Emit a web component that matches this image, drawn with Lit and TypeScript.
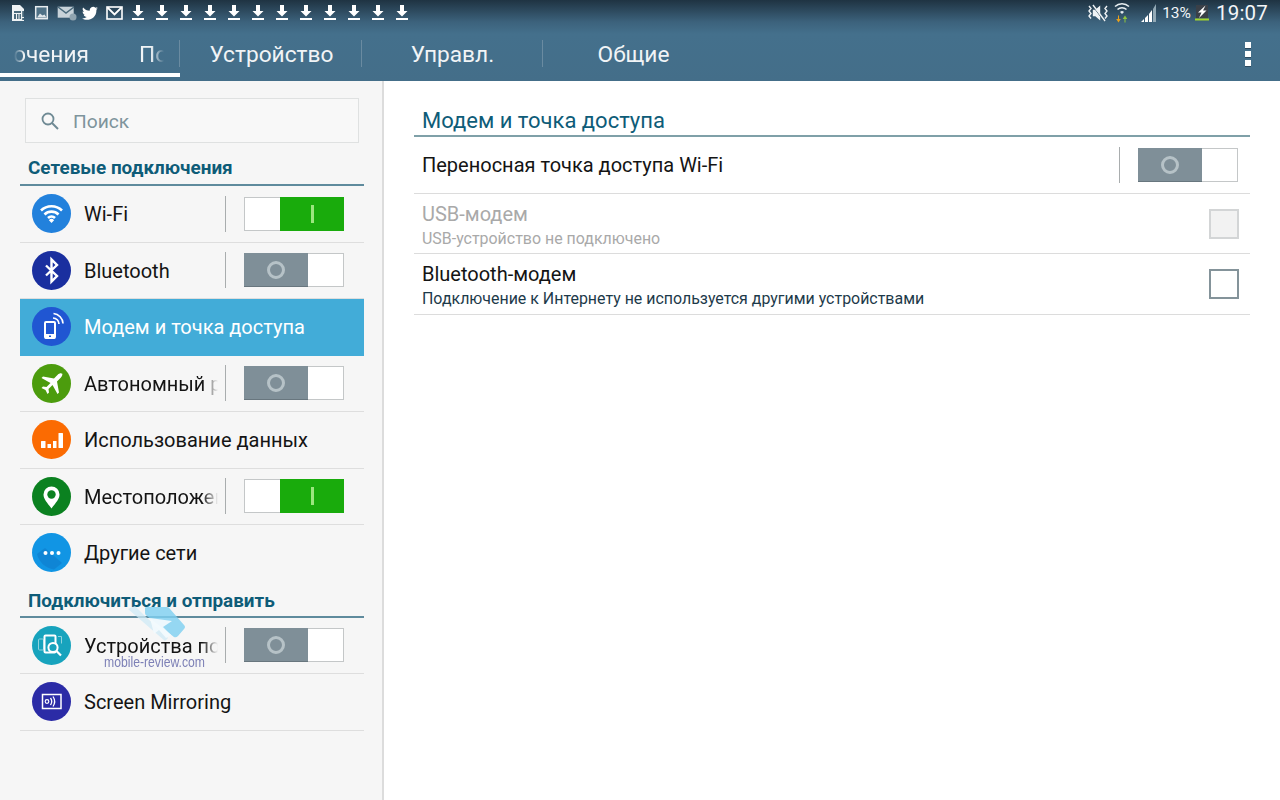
import { LitElement, html, css, svg } from "lit";
import { customElement } from "lit/decorators.js";

const ICONS: Record<string, any> = {
  wifi: svg`<g fill="none" stroke="#fff" stroke-width="2.600" stroke-linecap="butt"><path d="M9 16.500a15 15 0 0 1 21 0"/><path d="M12.500 20.500a10 10 0 0 1 14 0"/><path d="M16 24a5 5 0 0 1 7 0"/></g><path d="M19.500 29l-2.600-2.800a3.600 3.600 0 0 1 5.200 0z" fill="#fff"/>`,
  bt: svg`<path d="M14 14.500l11 10.500-5.500 5.500V8.500l5.500 5.500-11 10.500" fill="none" stroke="#fff" stroke-width="2.400"/>`,
  modem: svg`<rect x="13" y="15" width="10" height="16" rx="1" fill="none" stroke="#fff" stroke-width="2"/><rect x="13" y="27" width="10" height="4.500" fill="#fff"/><rect x="17" y="28.500" width="2" height="1.500" fill="#2056d2"/><g fill="none" stroke="#fff" stroke-width="1.700"><path d="M21 11a6 6 0 0 1 6 6"/><path d="M21.500 6.500a10.500 10.500 0 0 1 9.500 10"/></g>`,
  plane: svg`<path d="M30.200 9.800c-1-1-3-.5-4.500 1L22 14.500 11 12.500 9.500 14l9 5-4 4-3.500-.5L9.500 24l4 2 2 4 1.500-1.500-.5-3.500 4-4 5 9 1.500-1.500-2-11 3.700-3.700c1.500-1.500 2-3.500 1.500-4.500z" fill="#fff"/>`,
  data: svg`<g fill="#fff"><rect x="9" y="21" width="4.500" height="7" rx=".5"/><rect x="15.500" y="24" width="3.500" height="4"/><rect x="21" y="21" width="3.500" height="7"/><rect x="26.500" y="13" width="4.500" height="15" rx=".5"/></g>`,
  loc: svg`<path d="M19.500 31.500c-4.500-6-8-9.500-8-14a8 8 0 0 1 16 0c0 4.500-3.500 8-8 14z" fill="#fff"/><circle cx="19.500" cy="17.500" r="4.200" fill="#0b8120"/>`,
  more: svg`<path d="M5 21l8-6 17 15-8 6.500C13 35 7 29 5 21z" fill="#0e78c8" opacity=".55"/><g fill="#fff"><circle cx="13.500" cy="20" r="2"/><circle cx="20" cy="20" r="2"/><circle cx="26.500" cy="20" r="2"/></g>`,
  find: svg`<g fill="none" stroke="#8fd3de" stroke-width="1"><rect x="6.500" y="13" width="5" height="11" rx="1"/><path d="M26 10.500h3.500v7"/></g><rect x="12.500" y="9.500" width="11" height="17" rx="1" fill="none" stroke="#fff" stroke-width="2"/><circle cx="21" cy="21.500" r="4.600" fill="#17a3bd" stroke="#fff" stroke-width="2"/><path d="M24.500 25l4.500 4.500" stroke="#fff" stroke-width="2.200"/>`,
  mirror: svg`<rect x="10.500" y="12.500" width="18.500" height="14" fill="none" stroke="#fff" stroke-width="1.500"/><circle cx="15" cy="19.500" r="1.800" fill="none" stroke="#fff" stroke-width="1.200"/><g fill="none" stroke="#fff" stroke-width="1.300"><path d="M18.500 16a6 6 0 0 1 0 7"/><path d="M21 14.500a9 9 0 0 1 0 10"/></g>`,
};

type Row = { label: string; icon: string; color: string; toggle?: "on" | "off"; active?: boolean; clip?: boolean; last?: boolean };

const NET: Row[] = [
  { label: "Wi-Fi", icon: "wifi", color: "#2281dc", toggle: "on" },
  { label: "Bluetooth", icon: "bt", color: "#1a2f9f", toggle: "off" },
  { label: "Модем и точка доступа", icon: "modem", color: "#2056d2", active: true },
  { label: "Автономный режим", icon: "plane", color: "#4c9c0d", toggle: "off", clip: true },
  { label: "Использование данных", icon: "data", color: "#fb6b02" },
  { label: "Местоположение", icon: "loc", color: "#0b8120", toggle: "on", clip: true },
  { label: "Другие сети", icon: "more", color: "#1195e4", last: true },
];
const SHARE: Row[] = [
  { label: "Устройства поблизости", icon: "find", color: "#17a3bd", toggle: "off", clip: true },
  { label: "Screen Mirroring", icon: "mirror", color: "#2b2ba6" },
];

@customElement("app-root")
export class AppRoot extends LitElement {
  static styles = css`
    :host { display: block; width: 1280px; height: 800px; position: relative; overflow: hidden; background: #fff; font-family: Roboto, "Liberation Sans", sans-serif; }
    .top { height: 81px; background: linear-gradient(#1f3342 0, #3c627c 22px, #44708c 34px, #446e89 100%); display: flex; flex-direction: column; }
    .status { height: 32px; box-sizing: border-box; padding: 0 0 7px 11px; display: flex; align-items: center; color: #fff; }
    .status .left { display: flex; align-items: center; }
    .status .right { margin-left: auto; display: flex; align-items: center; }
    .notif { width: 24px; height: 16px; display: flex; justify-content: flex-start; flex: none; }
    .notif.wide { width: 25px; }
    .notif.nar { width: 23px; }
    .gap-wifi { margin-left: 5px; }
    .gap-sig { margin-left: 11px; }
    .pct { font-size: 15.500px; margin: 0 4px 0 5px; color: #f2f5f7; }
    .clock { font-size: 20.500px; margin: 0 12px 0 7px; color: #f4f6f8; letter-spacing: .2px; }
    .tabs { flex: 1; display: flex; height: 49px; position: relative; color: #f1f4f6; font-size: 22.700px; }
    .tab { width: 181px; display: flex; align-items: center; justify-content: center; position: relative; flex: none; padding-bottom: 5px; box-sizing: border-box; }
    .tab.sep::after { content: ""; position: absolute; right: 0; top: 8px; height: 27px; width: 1px; background: #6a8ba1; }
    .first { justify-content: flex-start; box-shadow: inset 0 -4px 0 #fff; width: 180px; margin-right: 1px; height: 45px; padding: 0; overflow: hidden; }
    .frag { overflow: hidden; white-space: nowrap; display: flex; flex: none; }
    .frag.a { width: 89px; justify-content: flex-end; -webkit-mask-image: linear-gradient(90deg, transparent 14px, #000 24px); mask-image: linear-gradient(90deg, transparent 14px, #000 24px); }
    .frag.b { width: 26px; margin-left: 50px; -webkit-mask-image: linear-gradient(90deg, #000 12px, transparent 25px); mask-image: linear-gradient(90deg, #000 12px, transparent 25px); }
    .dots { position: absolute; right: 29px; top: 10px; display: flex; flex-direction: column; gap: 3px; }
    .dots i { width: 6px; height: 6px; background: #fff; display: block; box-shadow: 0 1px 0 #2d4a5e; }
    .body { display: flex; height: 719px; }
    .side { background: #f6f6f6; border-right: 2px solid #dcdcdc; padding: 17px 18px 0 20px; width: 344px; flex: none; }
    .search { margin: 0 5px 0 5px; height: 45px; box-sizing: border-box; border: 1.500px solid #dfe1e1; display: flex; align-items: center; padding-left: 15px; gap: 14px; color: #7e949c; font-size: 19.200px; background: #f8f8f8; }
    .search span { position: relative; top: 1px; }
    .sec { height: 43px; box-sizing: border-box; border-bottom: 2px solid #5f8b9d; color: #0e5c78; font-weight: 700; font-size: 18.900px; padding: 15px 0 0 8px; line-height: 20px; white-space: nowrap; }
    .sec.two { height: 36px; padding-top: 9px; }
    .row { height: 56.500px; box-sizing: border-box; border-bottom: 1.500px solid #dedede; display: flex; align-items: center; padding-left: 12px; color: #141414; font-size: 20px; }
    .row.active { background: #42acd8; color: #fff; border-bottom-color: transparent; }
    .row.last { border-bottom-color: transparent; }
    .ic { width: 39px; height: 39px; flex: none; display: block; margin-right: 13px; }
    .lbl { white-space: nowrap; overflow: hidden; flex: 1; line-height: 28px; position: relative; top: .5px; }
    .lbl.clip { flex: none; width: 134px; -webkit-mask-image: linear-gradient(90deg, #000 118px, transparent 134px); mask-image: linear-gradient(90deg, #000 118px, transparent 134px); }
    .vsep { width: 1px; height: 36px; background: #a9adae; flex: none; margin: 0 18px 0 7px; }
    .tg { width: 100px; height: 34px; flex: none; display: flex; box-sizing: border-box; background: #fff; border: 1px solid #c4c7c8; margin-right: 20px; }
    .tg .thumb { display: flex; align-items: center; justify-content: center; }
    .tg.off .thumb { width: 64px; margin: -1px 0 -1px -1px; background: #7f8f98; border-bottom: 1px solid #68767e; }
    .tg.off .thumb i { width: 18px; height: 18px; border-radius: 50%; border: 3px solid #b6c2c7; background: #7f8f98; box-sizing: border-box; display: block; }
    .tg.on { flex-direction: row-reverse; }
    .tg.on .thumb { width: 64px; margin: -1px -1px -1px 0; background: #19ab0c; }
    .tg.on .thumb i { width: 3px; height: 18px; background: #9be67f; display: block; }
    .main { flex: 1; padding: 20px 30px 0; }
    .mtitle { height: 36px; box-sizing: border-box; border-bottom: 2px solid #7fa0a8; color: #0e5c78; font-size: 22px; padding: 10px 0 0 8px; line-height: 20px; }
    .mrow { display: flex; align-items: center; padding: 0 12px 0 8px; border-bottom: 1.500px solid #dcdcdc; box-sizing: border-box; color: #141414; font-size: 20px; }
    .mrow.r1 { height: 57px; }
    .mrow.r2 { height: 60px; }
    .mrow.r3 { height: 61px; }
    .mrow .txt { flex: 1; }
    .mrow .txt.two { padding-top: 6px; }
    .mrow .vsep { margin: 0 18px 0 0; }
    .mrow .tg { margin-right: 0; }
    .name { line-height: 24px; position: relative; top: -1px; }
    .sub { font-size: 15.940px; line-height: 24px; color: #1d3a4a; }
    .dis .name { color: #a9a9a9; }
    .dis .sub { color: #a9a9a9; }
    .cb { width: 30px; height: 30px; box-sizing: border-box; border: 2px solid #84939a; flex: none; margin-right: -1px; }
    .cb.d { border-color: #d3d5d6; background: #f2f2f2; }
    .wm { position: absolute; left: 104px; top: 603px; width: 104px; height: 70px; pointer-events: none; }
    .wm span { position: absolute; left: 0; bottom: 2px; font-family: "Liberation Sans", sans-serif; font-size: 15.500px; color: #7d80b6; transform: scaleX(.787); transform-origin: 0 50%; white-space: nowrap; }
    .wm svg { position: absolute; left: 24px; top: 0; }
  `;

  private note(g: any, cls = "") {
    return html`<span class="notif ${cls}"><svg width="22" height="16" viewBox="0 0 22 16">${g}</svg></span>`;
  }

  private dl() {
    return this.note(svg`<g transform="translate(-1 0)"><path d="M6 0h4v6h3.500L8 11.500 2.500 6H6z" fill="#fff"/><rect x="2" y="13" width="12" height="2" fill="#fff"/></g>`);
  }

  private row(r: Row) {
    return html`<div class="row ${r.active ? "active" : ""} ${r.last ? "last" : ""}">
      <svg class="ic" viewBox="0 0 39 39"><circle cx="19.500" cy="19.500" r="19.500" fill=${r.color}></circle>${ICONS[r.icon]}</svg>
      <div class="lbl ${r.clip ? "clip" : ""}">${r.label}</div>
      ${r.toggle ? html`<div class="vsep"></div>${this.toggle(r.toggle)}` : ""}
    </div>`;
  }

  private toggle(s: string) {
    return html`<div class="tg ${s}"><div class="thumb"><i></i></div></div>`;
  }

  render() {
    const dls = Array.from({ length: 12 }, () => this.dl());
    return html`
      <div class="top">
        <div class="status">
          <div class="left">
            ${this.note(svg`<path d="M1 0h8l4 4v12H1z" fill="#eef2f4"/><path d="M3 6h7v2H3zM3 9h2v5H3zM6 9h1.500v5H6zM8.500 9H10v5H8.500z" fill="#4a6a7c"/><rect x="11.200" y="6" width="1.800" height="6" fill="#4a6a7c"/><rect x="11.200" y="13" width="1.800" height="2" fill="#4a6a7c"/>`, "nar")}
            ${this.note(svg`<rect x="1.700" y="1.700" width="11.600" height="12" fill="#4f7186" stroke="#e7ecef" stroke-width="1.500"/><path d="M3 12.500l3-4 2.500 2 2-1 2 3z" fill="#dfe6ea"/>`, "nar")}
            ${this.note(svg`<rect x=".7" y="1.700" width="16" height="11" fill="#c7d2d9"/><path d="M1 2l8 6 8-6" fill="none" stroke="#4a6a7c" stroke-width="1.500"/><circle cx="16" cy="12" r="3.500" fill="#90a4b0"/>`, "wide")}
            ${this.note(svg`<path d="M16 3.200c-.6.300-1.200.5-1.900.6.700-.4 1.200-1 1.400-1.800-.6.400-1.300.6-2.100.8A3.300 3.300 0 0 0 7.800 5.800C5.100 5.700 2.700 4.400 1.100 2.400.2 3.900.7 5.800 2.100 6.800c-.5 0-1-.2-1.500-.4 0 1.600 1.100 3 2.600 3.300-.5.100-1 .2-1.500.1.400 1.300 1.600 2.200 3.100 2.300-1.400 1.100-3.200 1.600-4.800 1.400 5.900 3.600 15-.3 14.400-8.800.6-.5 1.200-1.100 1.600-1.500z" fill="#fff"/>`)}
            ${this.note(svg`<rect x="1" y="2" width="15" height="12" fill="none" stroke="#fff" stroke-width="1.600"/><path d="M1.500 2.500l7 7 7-7" fill="none" stroke="#fff" stroke-width="1.800"/>`, "wide")}
            ${dls}
          </div>
          <div class="right">
            <svg width="22" height="18" viewBox="0 0 22 18"><g fill="none" stroke="#eef2f4" stroke-width="1.400"><path d="M2 2l2 2.500L2 7l2 2.500L2 12l2 2.500M20 2l-2 2.500L20 7l-2 2.500 2 2.500-2 2.500"/><path d="M6.500 6.500h2l4-3.500v12l-4-3.500h-2z" fill="#eef2f4"/><path d="M5 1l12 16" stroke="#2a4658" stroke-width="1"/><path d="M6 1l12 16" stroke-width="1.400"/></g></svg>
            <svg class="gap-wifi" width="16" height="21" viewBox="0 0 16 21"><g fill="none" stroke="#e8eef1" stroke-width="1.500"><path d="M1 4.500a10 10 0 0 1 14 0"/><path d="M3.500 7.500a6.500 6.500 0 0 1 9 0"/></g><path d="M6 10a3 3 0 0 1 4 0l-2 2z" fill="#e8eef1"/><path d="M5 13.500v3.500h1.800L4.500 20.500 2.200 17H4v-3.500z" fill="#e7a01c"/><path d="M11.500 20.500V17h1.800l-2.300-3.500L8.700 17h1.800v3.500z" fill="#8fc63c"/></svg>
            <svg class="gap-sig" width="16" height="19" viewBox="0 0 16 19"><path d="M0 19l3-3v3zM4 15l3-3v7H4zM8 11l3-4v12H8z" fill="#fff"/><path d="M12 6l3-5v18h-3z" fill="#93a9b5"/></svg>
            <span class="pct">13%</span>
            <svg width="14" height="16" viewBox="0 0 14 16"><rect x="1" y="0" width="12" height="13" fill="#3a4048"/><rect x="0" y="13.500" width="14" height="2" fill="#a3d62f"/><path d="M10.500 .5L3 7.500h3.500L4 13l7.500-7.500H8z" fill="#fff"/></svg>
            <span class="clock">19:07</span>
          </div>
        </div>
        <div class="tabs">
          <div class="tab first sep"><span class="frag a">Подключения</span><span class="frag b">Подключения</span></div>
          <div class="tab sep"><span>Устройство</span></div>
          <div class="tab sep"><span>Управл.</span></div>
          <div class="tab"><span>Общие</span></div>
          <div class="dots"><i></i><i></i><i></i></div>
        </div>
      </div>
      <div class="body">
        <div class="side">
          <div class="search">
            <svg width="18" height="18" viewBox="0 0 18 18"><circle cx="7" cy="7" r="5.500" fill="none" stroke="#6f8a94" stroke-width="1.800"></circle><path d="M11 11l6 6" stroke="#6f8a94" stroke-width="2"></path></svg>
            <span>Поиск</span>
          </div>
          <div class="sec">Сетевые подключения</div>
          ${NET.map((r) => this.row(r))}
          <div class="sec two">Подключиться и отправить</div>
          ${SHARE.map((r) => this.row(r))}
        </div>
        <div class="main">
          <div class="mtitle">Модем и точка доступа</div>
          <div class="mrow r1"><div class="txt">Переносная точка доступа Wi-Fi</div><div class="vsep"></div>${this.toggle("off")}</div>
          <div class="mrow r2 dis"><div class="txt two"><div class="name">USB-модем</div><div class="sub">USB-устройство не подключено</div></div><div class="cb d"></div></div>
          <div class="mrow r3"><div class="txt two"><div class="name">Bluetooth-модем</div><div class="sub">Подключение к Интернету не используется другими устройствами</div></div><div class="cb"></div></div>
        </div>
      </div>
      <div class="wm">
        <svg width="60" height="40" viewBox="0 0 60 40"><path d="M0 6l7-3 9 9 24 23-3 3z" fill="#cfeaf6" opacity=".75"/><path d="M17 5q0-1 2-1l20 0q2 0 3 2l14 16q2 2 0 4l-6 7q-2 2-4 1L19 13q-2-1-2-3z" fill="#7fd0f0" opacity=".82"/><path d="M22 15l22 3-9 6 8 8-5 3-7-8-5 4z" fill="#f2fafd" opacity=".95"/></svg>
        <span>mobile-review.com</span>
      </div>
    `;
  }
}
